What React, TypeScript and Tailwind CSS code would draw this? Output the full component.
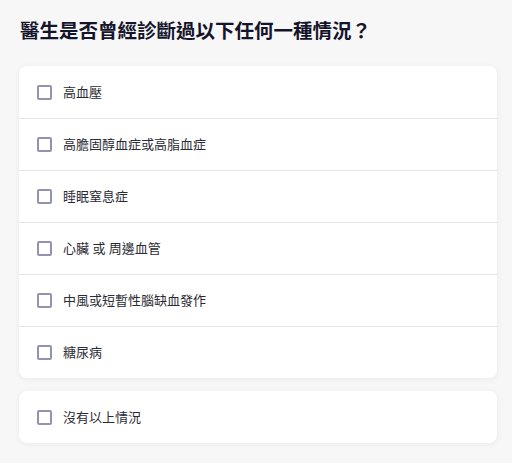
const CONDITIONS = [
  "高血壓",
  "高膽固醇血症或高脂血症",
  "睡眠窒息症",
  "心臟 或 周邊血管",
  "中風或短暫性腦缺血發作",
  "糖尿病",
];

function CheckRow({ label, divider }: { label: string; divider?: boolean }) {
  return (
    <label
      className={`flex h-[52px] cursor-pointer items-center gap-[11px] pl-[18px] ${
        divider ? "border-t border-[#e6e6ea]" : ""
      }`}
    >
      <span className="h-[15px] w-[15px] shrink-0 rounded-[2px] border-2 border-[#9591b3] bg-white" />
      <span className="text-[13px] leading-none text-[#2b2b33]">{label}</span>
    </label>
  );
}

export default function App() {
  return (
    <div
      className="min-h-[463px] bg-[#f7f7f8] pt-[19px] pr-[15px] pb-5 pl-[19px]"
      style={{ fontFamily: '"Noto Sans", "Noto Sans CJK TC", sans-serif' }}
    >
      <h1 className="pl-px text-[19.5px] leading-[24px] font-bold text-[#14142a]">
        醫生是否曾經診斷過以下任何一種情況？
      </h1>

      <div className="mt-[23px] overflow-hidden rounded-lg bg-white shadow-[0_1px_6px_rgba(20,20,40,0.06)]">
        {CONDITIONS.map((c, i) => (
          <CheckRow key={c} label={c} divider={i > 0} />
        ))}
      </div>

      <div className="mt-[13px] overflow-hidden rounded-lg bg-white shadow-[0_1px_6px_rgba(20,20,40,0.06)]">
        <CheckRow label="沒有以上情況" />
      </div>
    </div>
  );
}
